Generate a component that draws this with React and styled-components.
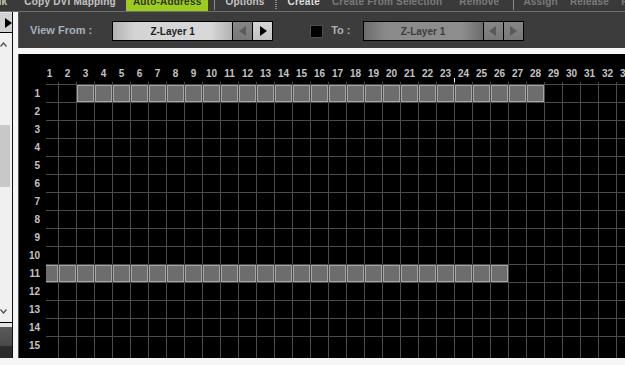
import React from "react";
import styled, { createGlobalStyle } from "styled-components";

const GlobalStyle = createGlobalStyle`
  html, body { margin: 0; padding: 0; background: #f6f6f6; overflow: hidden; }
  body { font-family: "Liberation Sans", Arial, sans-serif; }
`;

const Screen = styled.div`
  width: 625px;
  height: 365px;
  overflow: hidden;
  background: #f6f6f6;
  display: flex;
  flex-direction: column;
`;

/* ---------- top menu (scrolled, text clipped) ---------- */

const MenuBar = styled.div`
  height: 11px;
  flex: none;
  background: #3a3a3a;
  border-bottom: 1px solid #6e6e6e;
  overflow: hidden;
  display: flex;
  align-items: stretch;
`;

const MenuTrack = styled.div`
  display: flex;
  align-items: stretch;
  margin-left: -20px;
  white-space: nowrap;
`;

const MenuItem = styled.div`
  padding: 0 ${(p) => (p.$active ? "7px" : "6px")};
  padding-right: ${(p) => (p.$pr ? p.$pr + "px" : undefined)};
  padding-left: ${(p) => (p.$pl ? p.$pl + "px" : undefined)};
  margin: 0 ${(p) => (p.$active ? "4px" : "0")};
  font-size: 10px;
  font-weight: bold;
  letter-spacing: 0.2px;
  line-height: 12px;
  margin-top: -4px;
  height: 15px;
  color: ${(p) => (p.$active ? "#2e3320" : p.$disabled ? "#7a7a7a" : p.$bright ? "#dedede" : "#c4c4c4")};
  background: ${(p) => (p.$active ? "#9dcc1e" : "transparent")};
`;

const MenuSep = styled.div`
  width: ${(p) => (p.$dotted ? "2px" : "1px")};
  margin: ${(p) => p.$m};
  background: ${(p) =>
    p.$dotted
      ? "repeating-linear-gradient(to bottom, #8a8a8a 0 1px, transparent 1px 2px)"
      : "#8c8c8c"};
  height: 10px;
`;

/* ---------- body ---------- */

const Body = styled.div`
  flex: 1;
  display: flex;
  align-items: flex-start;
`;

const LeftCol = styled.div`
  width: 12px;
  flex: none;
  display: flex;
  flex-direction: column;
  border-right: 1px solid #111;
  height: 346px;
  background: #e4e4e4;
`;

const SideButton = styled.div`
  margin-top: 1px;
  height: 19px;
  background: #d2d2d2;
  border-bottom: 1px solid #000;
  display: flex;
  align-items: center;
  justify-content: flex-end;
`;

const SideList = styled.div`
  flex: 1;
  background: #f0f0f0;
  border-bottom: 1px solid #000;
  display: flex;
  flex-direction: column;
`;

const Chevron = styled.div`
  height: 6px;
  margin: ${(p) => p.$m};
  display: flex;
`;

const Track = styled.div`
  flex: 1;
`;

const Thumb = styled.div`
  margin-top: 77px;
  width: 10px;
  height: 62px;
  background: #c8c8c8;
`;

const SideDark = styled.div`
  margin-top: 4px;
  height: 31px;
  background: linear-gradient(to bottom, #5a5a5a, #4a4a4a 60%, #2c2c2c 62%, #2a2a2a);
`;

const Main = styled.div`
  flex: 1;
  margin-left: 5px;
  display: flex;
  flex-direction: column;
  gap: 6px;
`;

/* ---------- toolbar ---------- */

const Toolbar = styled.div`
  height: 36px;
  background: #3c3c3c;
  border-left: 1px solid #5c5c5c;
  display: flex;
  align-items: center;
  padding: 2px 0 0 11px;
  box-sizing: border-box;
`;

const Label = styled.div`
  font-size: 11px;
  font-weight: bold;
  color: #a7b0bb;
  margin-right: ${(p) => p.$mr}px;
  margin-top: -2px;
  white-space: nowrap;
`;

const Picker = styled.div`
  display: flex;
  border: 1px solid #000;
  height: 18px;
`;

const Field = styled.div`
  width: 119px;
  display: flex;
  align-items: center;
  justify-content: center;
  font-size: 10px;
  font-weight: bold;
  color: ${(p) => (p.$dim ? "#3e3e3e" : "#1e1e1e")};
  background: ${(p) =>
    p.$dim
      ? "linear-gradient(to right, #6c6c6c, #8a8a8a 18%, #8e8e8e 82%, #6c6c6c)"
      : "linear-gradient(to right, #b2b2b2, #d4d4d4 18%, #d8d8d8 82%, #b2b2b2)"};
`;

const ArrowBtn = styled.div`
  width: 19px;
  border-left: 1px solid #000;
  display: flex;
  align-items: center;
  justify-content: center;
  background: ${(p) =>
    p.$light
      ? "linear-gradient(to bottom, #d6d6d6, #c2c2c2)"
      : "linear-gradient(to bottom, #868686, #787878)"};
`;

const Check = styled.div`
  width: 11px;
  height: 11px;
  background: #000;
  border: 1px solid #4e4e4e;
  margin: 0 8px 0 37px;
`;

/* ---------- grid panel ---------- */

const GridPanel = styled.div`
  height: 304px;
  background: #000;
  border-left: 1px solid #555;
  display: grid;
  grid-template-columns: 27px 1fr;
  grid-template-rows: 28px 1fr;
  overflow: hidden;
`;

const ColHeader = styled.div`
  overflow: hidden;
  display: flex;
  align-items: flex-end;
  padding-bottom: 2px;
`;

const ColLabels = styled.div`
  display: grid;
  grid-template-columns: repeat(34, 17px);
  column-gap: 1px;
  margin-left: -5px;
`;

const ColLabel = styled.div`
  position: relative;
  text-align: center;
  font-size: 10px;
  font-weight: bold;
  line-height: 12px;
  color: #c4c4c4;
  white-space: nowrap;
`;

const Tick = styled.span`
  position: absolute;
  left: -1px;
  bottom: -2px;
  width: 1px;
  height: 4px;
  background: #fff;
`;

const RowHeader = styled.div`
  overflow: hidden;
  display: grid;
  grid-auto-rows: 17px;
  row-gap: 1px;
  padding-top: 3px;
  align-content: start;
`;

const RowLabel = styled.div`
  text-align: right;
  padding-right: 6px;
  font-size: 10px;
  font-weight: bold;
  line-height: 17px;
  color: #c4c4c4;
`;

const Cells = styled.div`
  overflow: hidden;
  background-color: #000;
  background-image: repeating-linear-gradient(to right, transparent 0 17px, #4c4c4c 17px 18px),
    repeating-linear-gradient(to bottom, transparent 0 17px, #4c4c4c 17px 18px);
  background-position: -5px 0, 0 -15px;
`;

const CellGrid = styled.div`
  display: grid;
  grid-template-columns: repeat(34, 17px);
  grid-auto-rows: 17px;
  gap: 1px;
  margin-left: -5px;
  padding-top: 3px;
`;

const Cell = styled.div`
  background: ${(p) => (p.$on ? "#6d6d6d" : "transparent")};
  box-shadow: ${(p) => (p.$on ? "inset 0 0 0 1px #a6a6a6" : "none")};
`;

const Tri = ({ dir, color }) => (
  <svg width="8" height="10" viewBox="0 0 8 10">
    {dir === "left" ? (
      <polygon points="7,0 7,10 0,5" fill={color} />
    ) : (
      <polygon points="1,0 1,10 8,5" fill={color} />
    )}
  </svg>
);

const COLS = 34;
const ROWS = 15;
const isOn = (r, c) => (r === 1 && c >= 3 && c <= 28) || (r === 11 && c >= 1 && c <= 26);

export default function App() {
  const cols = Array.from({ length: COLS }, (_, i) => i + 1);
  const rows = Array.from({ length: ROWS }, (_, i) => i + 1);

  return (
    <Screen>
      <GlobalStyle />
      <MenuBar>
        <MenuTrack>
          <MenuItem $pr={11}>Link</MenuItem>
          <MenuItem>Copy DVI Mapping</MenuItem>
          <MenuItem $active>Auto-Address</MenuItem>
          <MenuSep $m="0 4px 0 2px" />
          <MenuItem>Options</MenuItem>
          <MenuSep $dotted $m="0 5px 0 4px" />
          <MenuItem $bright>Create</MenuItem>
          <MenuItem $disabled>Create From Selection</MenuItem>
          <MenuItem $disabled $pl={11}>Remove</MenuItem>
          <MenuSep $m="0 3px 0 8px" />
          <MenuItem $disabled>Assign</MenuItem>
          <MenuItem $disabled>Release</MenuItem>
          <MenuItem $disabled>Reset</MenuItem>
        </MenuTrack>
      </MenuBar>

      <Body>
        <LeftCol>
          <SideButton>
            <Tri dir="right" color="#000" />
          </SideButton>
          <SideList>
            <Chevron $m="9px 0 0 0">
              <svg width="7" height="5" viewBox="0 0 7 5">
                <polyline points="0.5,4.5 3.5,1 6.5,4.5" fill="none" stroke="#555" strokeWidth="1.4" />
              </svg>
            </Chevron>
            <Track>
              <Thumb />
            </Track>
            <Chevron $m="0 0 7px 0">
              <svg width="7" height="5" viewBox="0 0 7 5">
                <polyline points="0.5,0.5 3.5,4 6.5,0.5" fill="none" stroke="#555" strokeWidth="1.4" />
              </svg>
            </Chevron>
          </SideList>
          <SideDark />
        </LeftCol>

        <Main>
          <Toolbar>
            <Label $mr={20}>View From :</Label>
            <Picker>
              <Field>Z-Layer 1</Field>
              <ArrowBtn>
                <Tri dir="left" color="#5c5c5c" />
              </ArrowBtn>
              <ArrowBtn $light>
                <Tri dir="right" color="#000" />
              </ArrowBtn>
            </Picker>
            <Check />
            <Label $mr={12}>To :</Label>
            <Picker>
              <Field $dim>Z-Layer 1</Field>
              <ArrowBtn>
                <Tri dir="left" color="#5a5a5a" />
              </ArrowBtn>
              <ArrowBtn>
                <Tri dir="right" color="#5a5a5a" />
              </ArrowBtn>
            </Picker>
          </Toolbar>

          <GridPanel>
            <div />
            <ColHeader>
              <ColLabels>
                {cols.map((c) => (
                  <ColLabel key={c}>
                    {c}
                    {c === 24 && <Tick />}
                  </ColLabel>
                ))}
              </ColLabels>
            </ColHeader>
            <RowHeader>
              {rows.map((r) => (
                <RowLabel key={r}>{r}</RowLabel>
              ))}
            </RowHeader>
            <Cells>
              <CellGrid>
                {rows.map((r) => cols.map((c) => <Cell key={r + "-" + c} $on={isOn(r, c)} />))}
              </CellGrid>
            </Cells>
          </GridPanel>
        </Main>
      </Body>
    </Screen>
  );
}
